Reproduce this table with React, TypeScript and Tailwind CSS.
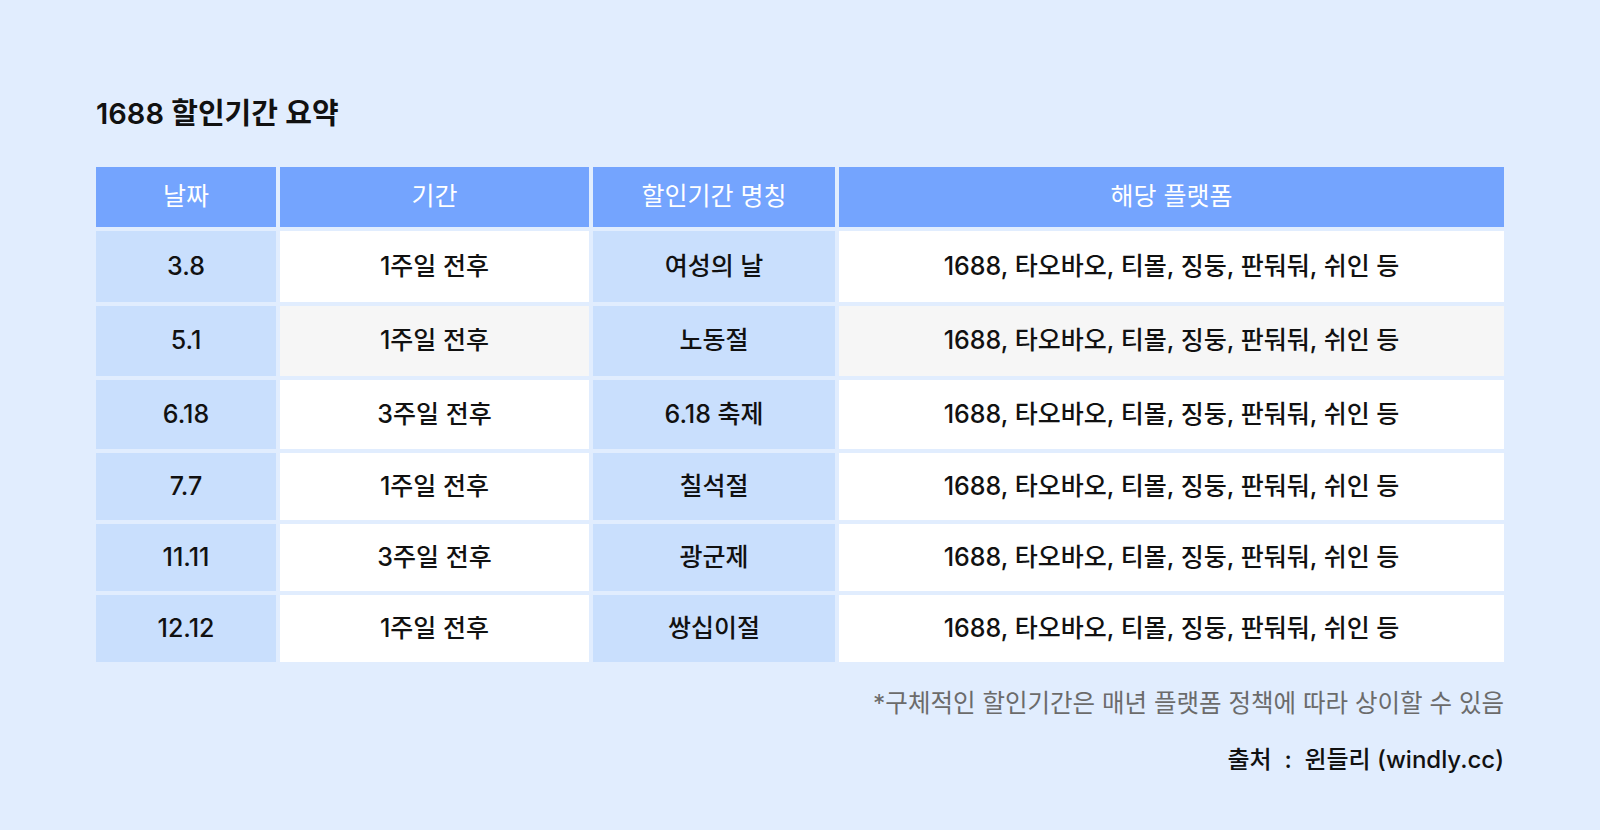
const rows = [
  { date: "3.8", period: "1주일 전후", name: "여성의 날", h: "h-[71px]" },
  { date: "5.1", period: "1주일 전후", name: "노동절", h: "h-[70px]", gray: true },
  { date: "6.18", period: "3주일 전후", name: "6.18 축제", h: "h-[69px]" },
  { date: "7.7", period: "1주일 전후", name: "칠석절", h: "h-[67px]" },
  { date: "11.11", period: "3주일 전후", name: "광군제", h: "h-[67px]" },
  { date: "12.12", period: "1주일 전후", name: "쌍십이절", h: "h-[67px]" },
];

const platforms = "1688, 타오바오, 티몰, 징둥, 판둬둬, 쉬인 등";
const headers = ["날짜", "기간", "할인기간 명칭", "해당 플랫폼"];

export default function App() {
  return (
    <div
      className="w-[1600px] h-[830px] bg-[#e1edfe] px-[96px] pt-[96px] text-[#111111]"
      style={{ fontFamily: "Inter, 'Noto Sans CJK KR', sans-serif" }}
    >
      <h1 className="text-[29px] leading-[36px] font-semibold">1688 할인기간 요약</h1>

      {/* table */}
      <div className="mt-[35px] grid grid-cols-[180px_309px_242px_1fr] gap-[4px]">
        {headers.map((h) => (
          <div
            key={h}
            className="h-[60px] bg-[#74a4fe] flex items-center justify-center text-white text-[25px]"
          >
            {h}
          </div>
        ))}
        {rows.map((r) => {
          const plain = r.gray ? "bg-[#f6f6f6]" : "bg-white";
          return [
            <div
              key={r.date + "a"}
              className={`${r.h} bg-[#c9dffd] flex items-center justify-center text-[25px] font-medium`}
            >
              {r.date}
            </div>,
            <div
              key={r.date + "b"}
              className={`${r.h} ${plain} flex items-center justify-center text-[25px] font-medium`}
            >
              {r.period}
            </div>,
            <div
              key={r.date + "c"}
              className={`${r.h} bg-[#c9dffd] flex items-center justify-center text-[25px] font-medium`}
            >
              {r.name}
            </div>,
            <div
              key={r.date + "d"}
              className={`${r.h} ${plain} flex items-center justify-center text-[25px] font-medium`}
            >
              {platforms}
            </div>,
          ];
        })}
      </div>

      <p className="mt-[26px] text-right text-[24.5px] leading-[30px] text-[#6b6b6b]">
        *구체적인 할인기간은 매년 플랫폼 정책에 따라 상이할 수 있음
      </p>
      <p className="mt-[27px] text-right text-[24px] leading-[30px] font-medium">
        출처 &nbsp;:&nbsp; 윈들리 (windly.cc)
      </p>
    </div>
  );
}
